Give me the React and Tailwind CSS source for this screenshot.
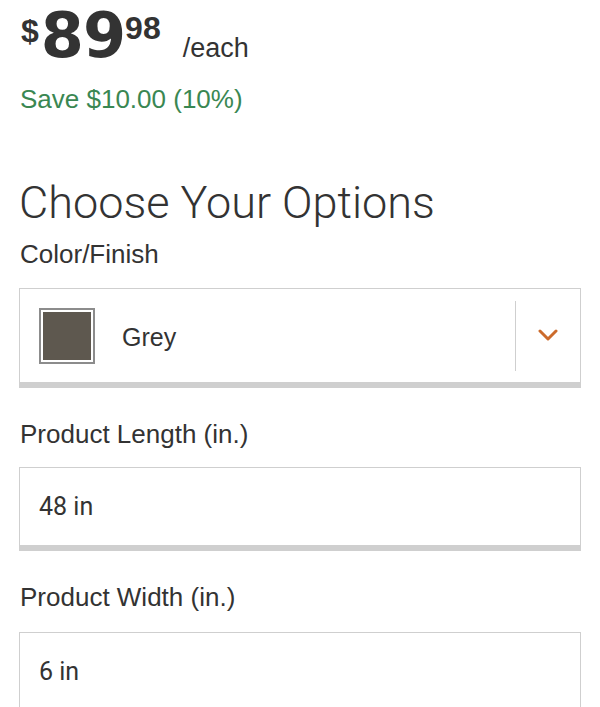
const Chevron = () => (
  <svg width="20" height="13" viewBox="0 0 20 13" fill="none">
    <path d="M2 2l8 8 8-8" stroke="#cc6b2c" strokeWidth="3" strokeLinecap="round" strokeLinejoin="round" />
  </svg>
);

const TextInput = ({ value }) => (
  <div className="mx-[19px] h-[84px] flex items-center border border-[#cfcfcf] border-b-[6px] bg-white pl-[19px]">
    <span className="font-['Roboto',sans-serif] text-[25px] leading-none text-[#333]">{value}</span>
  </div>
);

export default function App() {
  const label = "font-['Liberation_Sans',Arial,sans-serif] text-[26px] leading-none text-[#333]";

  return (
    <div className="w-[600px] h-[707px] overflow-hidden bg-white font-['Liberation_Sans',Arial,sans-serif] text-[#333]">
      {/* price */}
      <div className="flex items-start px-[21px] pt-[2px]">
        <span className="mt-[13px] text-[32px] font-bold leading-none">$</span>
        <span className="ml-[2px] mt-[3px] font-['DejaVu_Sans',sans-serif] text-[62px] font-bold leading-none tracking-[-1px]">
          89
        </span>
        <span className="mt-[10px] text-[32px] font-bold leading-none">98</span>
        <span className="ml-[22px] mt-[33px] text-[27px] leading-none">/each</span>
      </div>
      <div className="mt-[19px] px-[20px] text-[26px] leading-none text-[#3a8752]">Save $10.00 (10%)</div>

      <h2 className="mt-[68px] px-[19px] font-['Roboto',sans-serif] font-light text-[45px] leading-none text-[#333]">
        Choose Your Options
      </h2>

      <div className={"mt-[16px] px-[20px] " + label}>Color/Finish</div>
      <div className="mt-[21px] mx-[19px] h-[100px] flex items-center border border-[#cfcfcf] border-b-[6px] bg-white">
        <div className="ml-[19px] w-[56px] h-[56px] border-2 border-[#8c8c8c] p-[2px] bg-white">
          <div className="w-full h-full bg-[#5e584f]" />
        </div>
        <span className="ml-[27px] mt-[4px] text-[25px] leading-none text-[#333]">Grey</span>
        <div className="ml-auto w-px h-[70px] bg-[#cfcfcf]" />
        <div className="w-[64px] flex justify-center">
          <Chevron />
        </div>
      </div>

      <div className={"mt-[33px] px-[20px] " + label}>Product Length (in.)</div>
      <div className="mt-[20px]">
        <TextInput value="48 in" />
      </div>

      <div className={"mt-[33px] px-[20px] " + label}>Product Width (in.)</div>
      <div className="mt-[22px]">
        <TextInput value="6 in" />
      </div>
    </div>
  );
}
